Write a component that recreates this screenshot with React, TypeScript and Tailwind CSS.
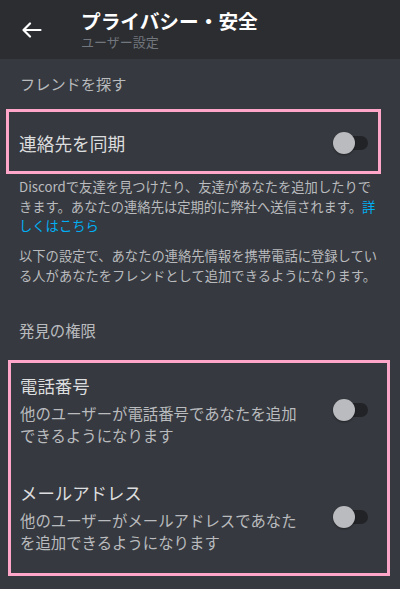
import React from "react";

function Toggle() {
  return (
    <div className="relative w-[35px] h-[22px] flex items-center shrink-0">
      <div className="ml-[1px] w-[34px] h-[14px] rounded-full bg-[#222327]" />
      <div className="absolute left-0 top-0 w-[22px] h-[22px] rounded-full bg-[#b9bbbe] shadow-[0_1px_2px_rgba(0,0,0,0.4)]" />
    </div>
  );
}

export default function App() {
  return (
    <div
      className="w-[400px] h-[589px] bg-[#36393f] overflow-hidden"
      style={{ fontFamily: '"Noto Sans CJK JP", "Noto Sans", sans-serif' }}
    >
      <div className="h-[59px] bg-[#2b2d31] flex items-center">
        <div className="w-[81px] pl-[22px] flex items-center">
          <svg width="20" height="16" viewBox="0 0 20 16" fill="none">
            <path d="M1.5 8H18.5M8 1.5L1.5 8L8 14.5" stroke="#ffffff" strokeWidth="2.2" strokeLinecap="round" strokeLinejoin="round" />
          </svg>
        </div>
        <div className="flex flex-col">
          <div className="text-[19.7px] leading-[24px] font-bold text-white">プライバシー・安全</div>
          <div className="mt-[1px] text-[13px] leading-[16px] text-[#72767d]">ユーザー設定</div>
        </div>
      </div>

      <div className="pt-[14px] px-[20px] text-[15.2px] leading-[20px] text-[#b9bbbe]">フレンドを探す</div>

      <div className="mt-[16px] ml-[6px] w-[375px] h-[65px] border-[3px] border-[#ffa6c9] flex items-center justify-between pl-[10px] pr-[10px] pt-[2px]">
        <div className="text-[17.7px] leading-[24px] text-[#dcddde]">連絡先を同期</div>
        <Toggle />
      </div>

      <div className="mt-[3px] px-[19px] text-[13.3px] leading-[19.5px] text-[#b9bbbe]">
        Discordで友達を見つけたり、友達があなたを追加したりできます。あなたの連絡先は定期的に弊社へ送信されます。
        <span className="text-[#00aff4]">詳しくはこちら</span>
      </div>
      <div className="mt-[10.5px] px-[19px] text-[13.3px] leading-[19.5px] text-[#b9bbbe]">
        以下の設定で、あなたの連絡先情報を携帯電話に登録している人があなたをフレンドとして追加できるようになります。
      </div>

      <div className="mt-[35px] px-[19px] text-[15.4px] leading-[20px] text-[#b9bbbe]">発見の権限</div>

      <div className="mt-[20px] ml-[8px] w-[382px] h-[216px] border-[3px] border-[#ffa6c9] pl-[9px] pr-[19px] pt-[11px] flex flex-col">
        <div className="flex items-center justify-between">
          <div className="flex flex-col">
            <div className="text-[17.4px] leading-[24px] text-[#dcddde]">電話番号</div>
            <div className="mt-[4px] w-[285px] text-[15.4px] leading-[22px] text-[#b9bbbe]">
              他のユーザーが電話番号であなたを追加できるようになります
            </div>
          </div>
          <Toggle />
        </div>
        <div className="mt-[35px] flex items-center justify-between">
          <div className="flex flex-col">
            <div className="text-[17.4px] leading-[24px] text-[#dcddde]">メールアドレス</div>
            <div className="mt-[4px] w-[285px] text-[15.4px] leading-[22px] text-[#b9bbbe]">
              他のユーザーがメールアドレスであなたを追加できるようになります
            </div>
          </div>
          <Toggle />
        </div>
      </div>
    </div>
  );
}
